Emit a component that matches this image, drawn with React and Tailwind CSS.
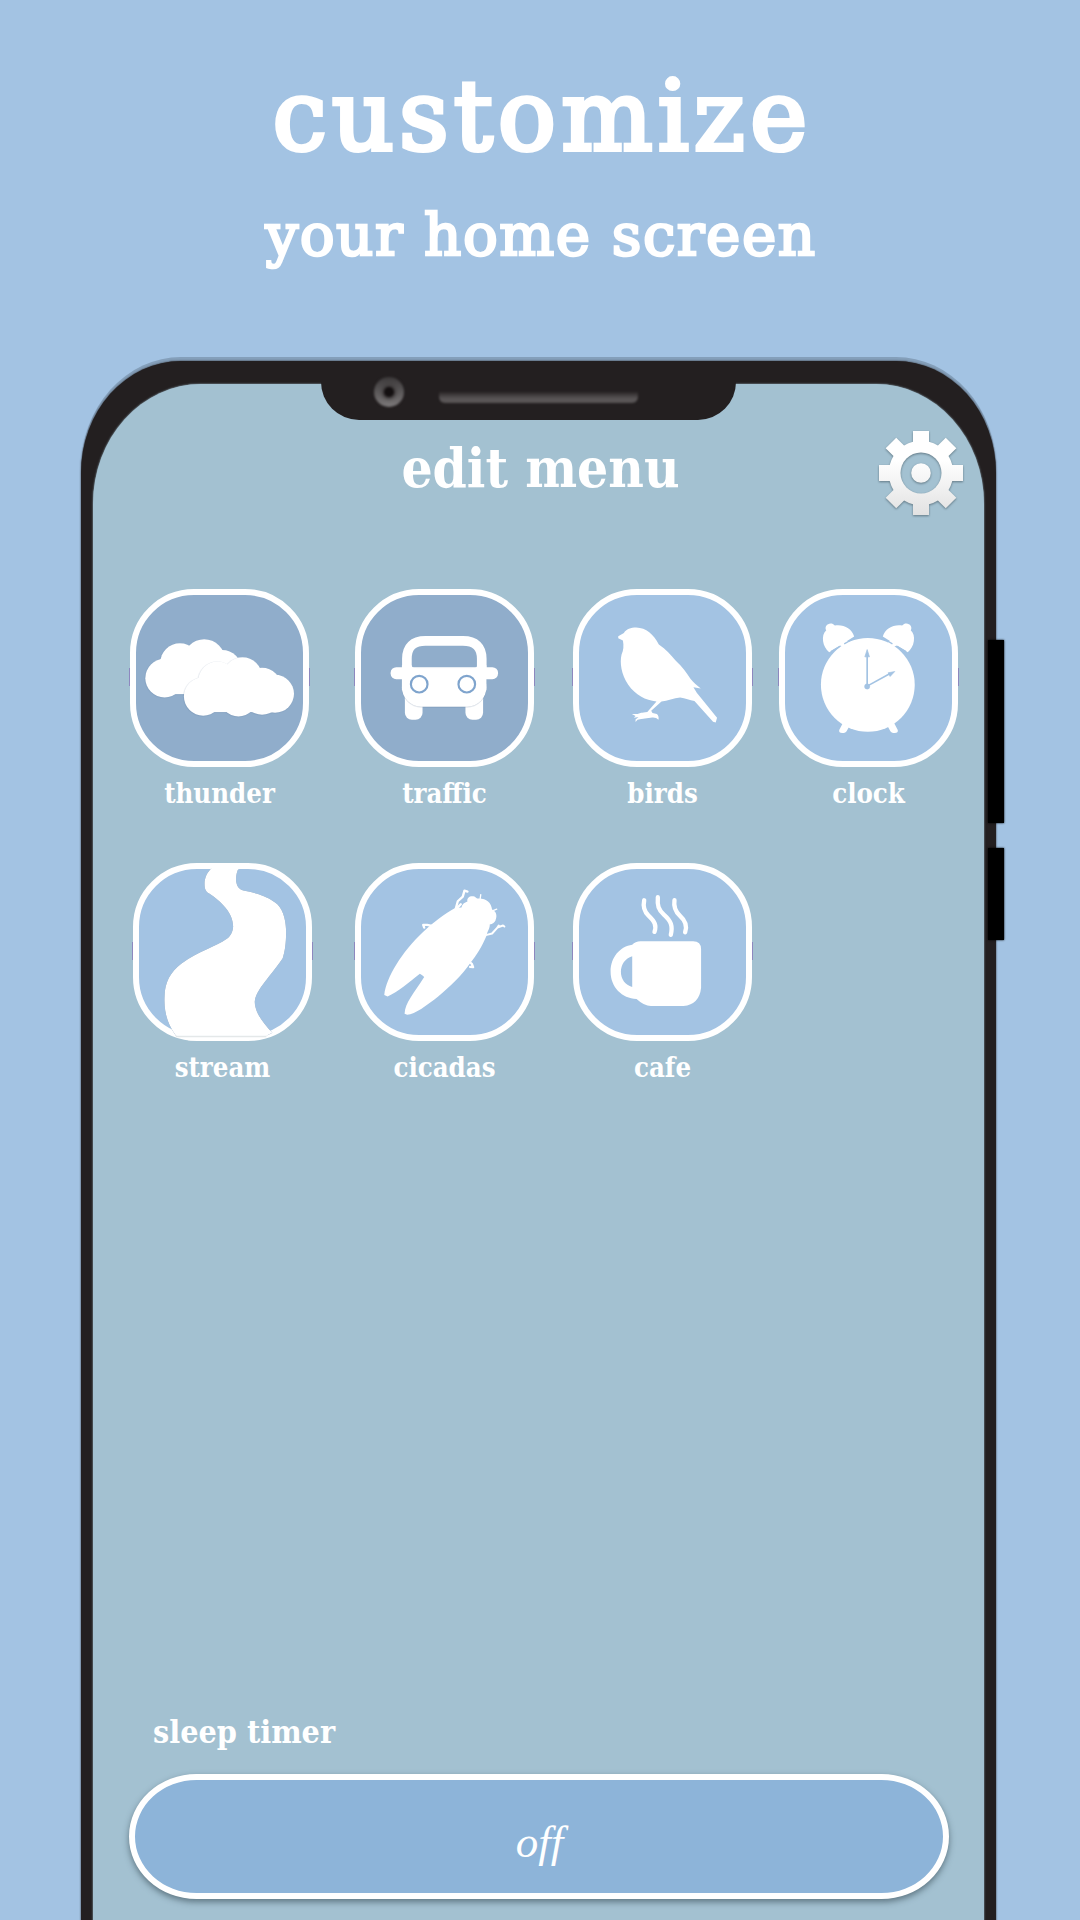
const WHITE = "#ffffff";

function ThunderIcon() {
  return (
    <svg viewBox="28 26 538 534" fill={WHITE} className="absolute -inset-[6px]">
      <g className="drop-shadow-[-1px_1px_1px_rgba(60,90,130,0.25)]">
        <circle cx="132" cy="294" r="58" />
        <circle cx="178" cy="248" r="59" />
        <circle cx="251" cy="240" r="63" />
        <circle cx="305" cy="268" r="59" />
        <rect x="130" y="255" width="200" height="87" />
      </g>
      <g className="drop-shadow-[-1px_1px_1px_rgba(60,90,130,0.3)]">
        <circle cx="248" cy="349" r="58" />
        <circle cx="291" cy="302" r="58" />
        <circle cx="366" cy="290" r="59" />
        <circle cx="354" cy="352" r="57" />
        <circle cx="425" cy="321" r="58" />
        <circle cx="425" cy="347" r="57" />
        <circle cx="464" cy="341" r="57" />
        <rect x="250" y="290" width="215" height="106" />
      </g>
    </svg>
  );
}

function TrafficIcon() {
  return (
    <svg viewBox="28 26 538 534" fill={WHITE} className="absolute -inset-[6px]">
      <rect x="178" y="330" width="53" height="89" rx="21" />
      <rect x="360" y="330" width="53" height="89" rx="21" />
      <rect x="178" y="330" width="50" height="30" />
      <rect x="363" y="330" width="50" height="30" />
      <path d="M184 290V236Q184 182 240 182H352Q409 182 409 236V290" fill="none" stroke={WHITE} strokeWidth="29" />
      <rect x="135" y="261" width="323" height="36" rx="17" />
      <g className="drop-shadow-[0_1px_1px_rgba(60,90,130,0.4)]">
        <rect x="169" y="264" width="254" height="116" rx="58" />
      </g>
      <path d="M169 255H198Q199 262 207 264H387Q395 262 396 255H423V330H169Z" />
      <g stroke="#7fa4cd" strokeWidth="6.5">
        <circle cx="221" cy="312" r="25" />
        <circle cx="364" cy="312" r="25" />
      </g>
    </svg>
  );
}

function BirdIcon() {
  return (
    <svg viewBox="38 26 538 534" fill={WHITE} className="absolute -inset-[6px]">
      <path d="M174 168L191 158C198 147 212 142 228 142C258 143 280 162 296 193C318 207 332 224 347 242C367 260 379 278 391 296C399 307 410 315 422 325L400 321L410 338L471 413L467 427L459 425L403 363C389 360 376 355 360 352C341 354 322 362 304 364L273 392L277 399L290 402Q297 408 295 419Q288 411 276 412L243 417L232 419L226 426L226 418L235 411L221 413L226 408L215 402L232 402L243 398L260 397L289 364C256 361 226 345 204 314C183 283 178 247 184 223C190 211 191 197 188 181L174 174Z" />
      <path d="M240 400L262 396L275 398L273 411L242 415Z" />
    </svg>
  );
}

function ClockIcon() {
  const bell = "M177 216C157 201 151 165 168 150C161 139 174 125 188 131L194 136C220 132 245 145 252 169Z";
  return (
    <svg viewBox="26 26 538 534" fill={WHITE} className="absolute -inset-[6px]">
      <path d={bell} />
      <path d={bell} transform="matrix(-1 0 0 1 590 0)" />
      <path d="M195 190L232 205L240 190L222 175ZM395 190L358 205L350 190L368 175Z" />
      <circle cx="293" cy="314" r="141" />
      <path d="M220 425L207 450Q205 459 216 459Q227 459 230 452L242 430ZM370 425L383 450Q385 459 374 459Q363 459 360 452L348 430Z" />
      <g fill="#a3c3e3" stroke="#a3c3e3">
        <path d="M207 200L182 214M383 200L408 214M222 191L252 174M367 191L338 174" strokeWidth="4" />
        <path d="M291 318V222" strokeWidth="5" />
        <path d="M291 318L360 280" strokeWidth="5" />
        <path d="M291 208L284 230H298ZM374 274L354 278L360 289Z" strokeWidth="2" />
        <circle cx="291" cy="319" r="8" strokeWidth="1" />
      </g>
    </svg>
  );
}

function StreamIcon() {
  return (
    <svg viewBox="39 23 538 534" fill={WHITE} className="absolute -inset-[6px]">
      <g className="drop-shadow-[0_0_1px_rgba(60,100,140,0.75)]">
        <path d="M277 37C262 49 254 68 254 85C254 100 257 108 268 115C303 138 340 173 340 214C339 232 330 245 321 251C290 273 238 288 185 325C151 350 135 383 134 421C131 468 142 507 168 542H440L458 533C432 507 405 472 405 440C407 404 457 358 489 309C497 287 500 253 499 222C498 190 488 155 465 141C437 120 405 113 371 106C357 102 351 92 349 77C348 62 351 49 357 37Z" />
      </g>
      <path d="M277 24H358V42H274ZM166 541H446L405 556H205Z" />
      <path d="M168 545H440" stroke="#e4e8e9" strokeWidth="4" />
    </svg>
  );
}

function CicadaIcon() {
  return (
    <svg viewBox="28 23 538 534" fill={WHITE} className="absolute -inset-[6px]">
      <path d="M116 420C122 366 169 291 231 232C264 200 298 175 329 158L348 157C350 147 357 142 366 139C363 126 376 120 387 124L395 130C419 127 438 140 440 163C452 168 456 181 451 193C449 203 441 206 433 208C434 220 425 229 424 240C410 274 393 300 375 323C351 359 313 396 278 424C246 449 208 478 185 479L177 476C179 443 204 416 236 366L231 361L223 356C193 380 156 411 126 424Z" />
      <g fill="none" stroke={WHITE} strokeWidth="7" strokeLinecap="round" strokeLinejoin="round">
        <path d="M331 160L337 138L352 124L357 106L366 109" />
        <path d="M336 157L346 147" />
        <path d="M262 213L245 209L233 209L236 217" />
        <path d="M424 239L440 235L456 217L473 211L477 214M456 217L460 211" strokeWidth="6" />
        <path d="M372 320L379 326L383 336L374 335" />
        <path d="M404 132L406 118M441 167L454 162" strokeWidth="4" />
      </g>
    </svg>
  );
}

function CafeIcon() {
  return (
    <svg viewBox="38 23 538 534" fill={WHITE} className="absolute -inset-[6px]">
      <path d="M216 269Q225 258 241 258H399Q423 258 423 282V398Q418 448 370 453H272Q252 453 229 432C185 430 151 396 151 350C151 306 180 274 216 269ZM216 303C195 309 182 328 182 350C182 372 195 390 216 396Z" fillRule="evenodd" />
      <g fill="none" stroke={WHITE} strokeWidth="13" strokeLinecap="round">
        <path d="M252 135C248 154 252 169 265 181C283 198 290 210 283 230" />
        <path d="M293 126C291 151 295 164 311 178C334 198 338 213 332 239" />
        <path d="M343 135C340 155 345 168 359 181C377 197 382 212 375 231" />
      </g>
    </svg>
  );
}

function GearIcon() {
  const angles = [0, 45, 90, 135, 180, 225, 270, 315];
  return (
    <svg viewBox="-43 -43 86 86" className="h-[86px] w-[86px] justify-self-end overflow-visible drop-shadow-[0_1px_1px_rgba(70,90,100,0.7)]">
      <defs>
        <linearGradient id="gear" gradientUnits="userSpaceOnUse" x1="0" y1="-42" x2="0" y2="42">
          <stop offset="0.35" stopColor="#ffffff" />
          <stop offset="1" stopColor="#e2e2e2" />
        </linearGradient>
        <mask id="ring" maskUnits="userSpaceOnUse" x="-43" y="-43" width="86" height="86">
          <rect x="-43" y="-43" width="86" height="86" fill="white" />
          <circle r="20.5" fill="black" />
          <circle r="9.8" fill="white" />
        </mask>
        <clipPath id="teeth">
          <circle r="32.3" />
          {angles.map((a) => (
            <path key={a} d={a % 90 === 0 ? "M-8 0V-42H8V0Z" : "M-7.5 0V-42.5H7.5V0Z"} transform={`rotate(${a})`} />
          ))}
        </clipPath>
      </defs>
      <g mask="url(#ring)">
        <rect x="-43" y="-43" width="86" height="86" fill="url(#gear)" clipPath="url(#teeth)" />
      </g>
    </svg>
  );
}

function Tile({ label, icon: Icon, fill = "bg-[#a3c3e3]", className = "" }) {
  return (
    <div className={`flex w-[179px] flex-col items-center ${className}`}>
      <div className={`relative h-[178px] w-[179px] rounded-[64px] border-[6px] border-white ${fill}`}>
        <span className="absolute -left-[7px] top-[73px] h-[18px] w-px bg-[#8d88bf]" />
        <span className="absolute -right-[7px] top-[73px] h-[18px] w-px bg-[#8d88bf]" />
        <Icon />
      </div>
      <span className="mt-2 whitespace-nowrap text-[27.3px] leading-[36px]">{label}</span>
    </div>
  );
}

function Notch() {
  return (
    <div className="relative -mt-1 ml-[228px] h-10 w-[415px] rounded-b-[38px] bg-[#231f20]">
      <div className="absolute -top-[3px] left-[53px] flex h-[30px] w-[30px] items-center justify-center rounded-full bg-linear-to-b from-[#3c393a] to-[#7d7a7b] blur-[1px]">
        <div className="h-[10px] w-[10px] rounded-full bg-[#141011] shadow-[0_0_3px_2px_#3a3637]" />
      </div>
      <div className="absolute left-[118px] top-[12px] h-[11px] w-[199px] rounded-b-[6px] bg-linear-to-b from-[#2b2728] to-[#595556] to-60% blur-[1px]" />
    </div>
  );
}

export default function App() {
  return (
    <div className="h-[1920px] w-[1080px] overflow-hidden bg-[#a3c3e3] text-white">
      <header className="flex h-[361px] flex-col items-center pt-[57px] font-['DejaVu_Serif',serif]">
        <h1 className="scale-x-[1.1] whitespace-nowrap pl-[5px] text-[97px] leading-[120px] font-stretch-condensed tracking-[5px] [-webkit-text-stroke:4.2px_white]">
          customize
        </h1>
        <p className="mt-[23px] whitespace-nowrap pl-[2px] text-[58px] leading-[70px] tracking-[1.5px] [-webkit-text-stroke:2.6px_white]">your home screen</p>
      </header>

      <main className="relative ml-[81px] h-[1700px] w-[915px] rounded-[100px_100px_0_0/112px_112px_0_0] bg-[#231f20] pl-3 pr-[12px] pt-[23px] shadow-[0_0_2px_#231f20,0_-4px_0_#849fba]">
        <div className="absolute left-[907px] top-[279px] h-[183px] w-4 bg-black shadow-[0_0_2px_#000]" />
        <div className="absolute left-[907px] top-[487px] h-[92px] w-4 bg-black shadow-[0_0_2px_#000]" />

        <section className="relative flow-root h-full rounded-[108px_108px_0_0/120px_120px_0_0] bg-[#a3c1d1] font-['DejaVu_Serif_Condensed','DejaVu_Serif',serif] font-bold shadow-[0_0_2px_#a3c1d1]">
          <Notch />

          <div className="mt-[10px] grid h-[86px] grid-cols-[1fr_auto_1fr] items-start pl-6 pr-5">
            <span />
            <h2 className="mt-2 whitespace-nowrap text-[54.5px] leading-[60px]">edit menu</h2>
            <GearIcon />
          </div>

          <div className="mt-[73px] flex pl-[37px]">
            <Tile label="thunder" icon={ThunderIcon} fill="bg-[#90adcb]" />
            <Tile label="traffic" icon={TrafficIcon} fill="bg-[#90adcb]" className="ml-[46px]" />
            <Tile label="birds" icon={BirdIcon} className="ml-[39px]" />
            <Tile label="clock" icon={ClockIcon} className="ml-[27px]" />
          </div>

          <div className="mt-[52px] flex pl-10">
            <Tile label="stream" icon={StreamIcon} />
            <Tile label="cicadas" icon={CicadaIcon} className="ml-[43px]" />
            <Tile label="cafe" icon={CafeIcon} className="ml-[39px]" />
          </div>

          <div className="mt-[627px] pl-[60px] text-[32px] leading-[40px]">sleep timer</div>
          <button className="ml-9 mt-[22px] flex h-[125px] w-[820px] items-center justify-center rounded-[68px/63px] border-[6.5px] border-white bg-[#8db4d9] pl-px pt-3 font-['Liberation_Serif',serif] text-[45px] font-normal italic shadow-[0_3px_6px_rgba(50,70,80,0.6)]">
            off
          </button>
        </section>
      </main>
    </div>
  );
}
